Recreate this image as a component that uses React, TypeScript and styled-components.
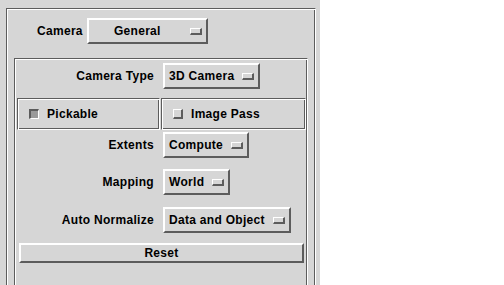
import React from "react";
import styled, { createGlobalStyle } from "styled-components";

const BG = "#d6d6d6";
const DARK = "#5c5c5c";
const LIGHT = "#ffffff";

const GlobalStyle = createGlobalStyle`
  * { box-sizing: border-box; }
  html, body {
    margin: 0;
    padding: 0;
    background: #ffffff;
    overflow: hidden;
  }
`;

const Panel = styled.div`
  width: 320px;
  height: 285px;
  overflow: hidden;
  background: ${BG};
  padding: 8px 4px 0 6px;
  font: bold 12px "Liberation Sans", Arial, sans-serif;
  letter-spacing: 0.3px;
  color: #000;
`;

// etched-in frame: dark then white on top/left, white outside dark on bottom/right
const Etched = styled.div`
  border: 1px solid;
  border-color: ${DARK} ${LIGHT} ${LIGHT} ${DARK};
  box-shadow: inset 1px 1px 0 ${LIGHT}, inset -1px -1px 0 ${DARK};
`;

const OuterFrame = styled(Etched)`
  width: 310px;
  height: 320px;
  padding: 9px 7px 0;
`;

const InnerFrame = styled(Etched)`
  width: 294px;
  height: 260px;
  margin-top: 14px;
  display: flex;
  flex-direction: column;
`;

const TopRow = styled.div`
  display: flex;
  align-items: center;
  gap: 4px;
  padding-left: 23px;
`;

const Row = styled.div<{ $top: number }>`
  display: flex;
  align-items: center;
  gap: 9px;
  margin-top: ${(p) => p.$top}px;
`;

const Label = styled.div`
  width: 139px;
  text-align: right;
  white-space: nowrap;
`;

const OptionButton = styled.div<{ $width?: number }>`
  display: flex;
  align-items: center;
  height: 26px;
  width: ${(p) => (p.$width ? `${p.$width}px` : "auto")};
  border-style: solid;
  border-width: 2px;
  border-color: ${LIGHT} ${DARK} ${DARK} ${LIGHT};
  padding: 0 4px 0 4px;
  gap: 8px;
  white-space: nowrap;
`;

const OptionText = styled.span<{ $center?: boolean }>`
  flex: ${(p) => (p.$center ? 1 : "none")};
  text-align: ${(p) => (p.$center ? "center" : "left")};
`;

const Indicator = styled.span`
  width: 12px;
  height: 7px;
  border-style: solid;
  border-width: 1px 2px 2px 1px;
  border-color: ${LIGHT} ${DARK} ${DARK} ${LIGHT};
`;

const ToggleGrid = styled.div`
  display: grid;
  grid-template-columns: 143px 145px;
  column-gap: 1px;
  margin: 9px 0 0 2px;
`;

const ToggleFrame = styled(Etched)`
  height: 32px;
  display: flex;
  align-items: center;
  gap: 8px;
  padding-left: 11px;
`;

const CheckBox = styled.span<{ $on?: boolean }>`
  width: 10px;
  height: 10px;
  border-style: solid;
  border-width: ${(p) => (p.$on ? "2px 1px 1px 2px" : "1px 2px 2px 1px")};
  border-color: ${(p) =>
    p.$on
      ? `${DARK} ${LIGHT} ${LIGHT} ${DARK}`
      : `${LIGHT} ${DARK} ${DARK} ${LIGHT}`};
  background: ${(p) => (p.$on ? "#9a9a9a" : BG)};
`;

const ResetButton = styled.div`
  margin: 10px 0 0 4px;
  width: 285px;
  height: 20px;
  display: flex;
  align-items: center;
  justify-content: center;
  border-style: solid;
  border-width: 2px;
  border-color: ${LIGHT} ${DARK} ${DARK} ${LIGHT};
`;

const Option = ({ value, width }: { value: string; width?: number }) => (
  <OptionButton $width={width}>
    <OptionText $center={!!width}>{value}</OptionText>
    <Indicator />
  </OptionButton>
);

const rows = [
  { label: "Extents", value: "Compute", top: 2 },
  { label: "Mapping", value: "World", top: 11 },
  { label: "Auto Normalize", value: "Data and Object", top: 12 },
];

const App = () => {
  return (
    <>
      <GlobalStyle />
      <Panel>
        <OuterFrame>
          <TopRow>
            <span>Camera</span>
            <Option value="General" width={121} />
          </TopRow>
          <InnerFrame>
            <Row $top={4}>
              <Label>Camera Type</Label>
              <Option value="3D Camera" />
            </Row>
            <ToggleGrid>
              <ToggleFrame>
                <CheckBox $on />
                <span>Pickable</span>
              </ToggleFrame>
              <ToggleFrame>
                <CheckBox />
                <span>Image Pass</span>
              </ToggleFrame>
            </ToggleGrid>
            {rows.map((r) => (
              <Row key={r.label} $top={r.top}>
                <Label>{r.label}</Label>
                <Option value={r.value} />
              </Row>
            ))}
            <ResetButton>Reset</ResetButton>
          </InnerFrame>
        </OuterFrame>
      </Panel>
    </>
  );
};

export default App;
